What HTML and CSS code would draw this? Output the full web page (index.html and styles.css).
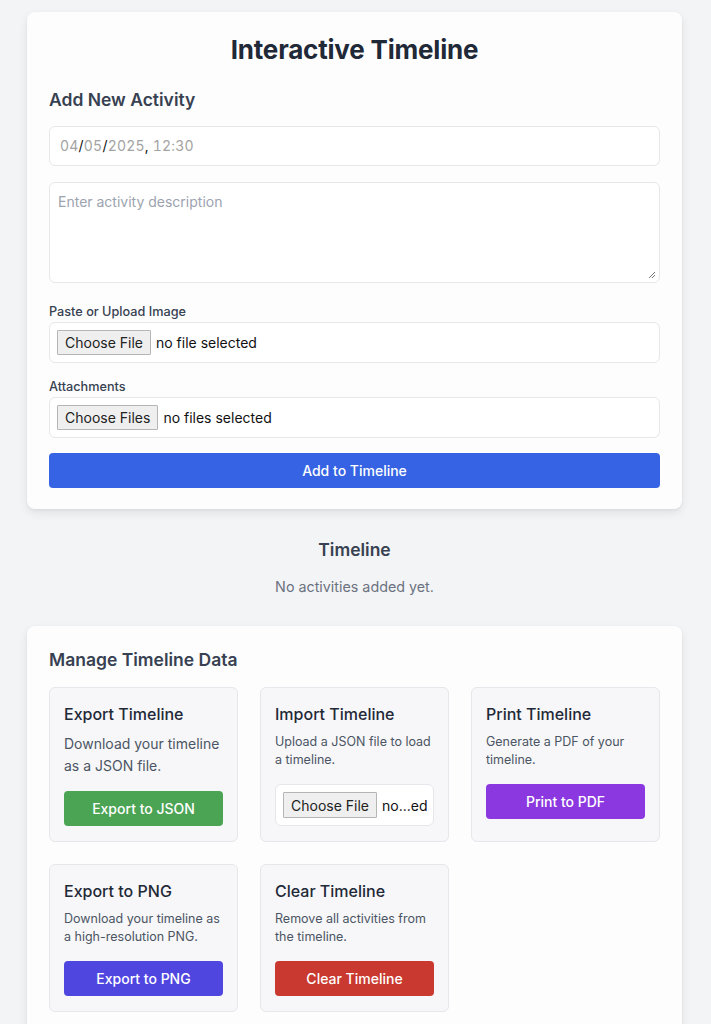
FILE: index.html
```html
<!DOCTYPE html>
<html lang="en">
<head>
<meta charset="utf-8">
<title>Interactive Timeline</title>
<link rel="stylesheet" href="styles.css">
</head>
<body>
<main class="page">
  <section class="card form-card">
    <h1 class="title">Interactive Timeline</h1>
    <h2 class="section-title">Add New Activity</h2>
    <div class="field date-field"><span class="dim">04</span>/<span class="dim">05</span>/<span class="dim">2025</span>,&nbsp;<span class="dim">12:30</span></div>
    <div class="field textarea-field">
      <span class="placeholder">Enter activity description</span>
      <svg class="grip" width="8" height="8" viewBox="0 0 8 8"><path d="M7 1L1 7M7 4L4 7" stroke="#777" stroke-width="1" fill="none"/></svg>
    </div>
    <div class="label">Paste or Upload Image</div>
    <div class="field file-field">
      <span class="file-btn">Choose File</span><span class="file-text">no file selected</span>
    </div>
    <div class="label">Attachments</div>
    <div class="field file-field">
      <span class="file-btn">Choose Files</span><span class="file-text">no files selected</span>
    </div>
    <button class="btn btn-blue btn-full">Add to Timeline</button>
  </section>

  <section class="timeline">
    <h2 class="timeline-title">Timeline</h2>
    <p class="empty">No activities added yet.</p>
  </section>

  <section class="card manage-card">
    <h2 class="section-title">Manage Timeline Data</h2>
    <div class="grid">
      <div class="tile">
        <h3 class="tile-title">Export Timeline</h3>
        <p class="tile-desc large">Download your timeline as a JSON file.</p>
        <button class="btn btn-green">Export to JSON</button>
      </div>
      <div class="tile">
        <h3 class="tile-title">Import Timeline</h3>
        <p class="tile-desc">Upload a JSON file to load a timeline.</p>
        <div class="field file-field small-file">
          <span class="file-btn">Choose File</span><span class="file-text">no...ed</span>
        </div>
      </div>
      <div class="tile">
        <h3 class="tile-title">Print Timeline</h3>
        <p class="tile-desc">Generate a PDF of your timeline.</p>
        <button class="btn btn-purple">Print to PDF</button>
      </div>
      <div class="tile">
        <h3 class="tile-title">Export to PNG</h3>
        <p class="tile-desc">Download your timeline as a high-resolution PNG.</p>
        <button class="btn btn-indigo">Export to PNG</button>
      </div>
      <div class="tile">
        <h3 class="tile-title">Clear Timeline</h3>
        <p class="tile-desc">Remove all activities from the timeline.</p>
        <button class="btn btn-red">Clear Timeline</button>
      </div>
    </div>
  </section>
</main>
</body>
</html>
```

FILE: styles.css
```css
* { box-sizing: border-box; }
html, body { margin: 0; padding: 0; }
body {
  background: #f3f4f6;
  font-family: Inter, "Noto Sans", sans-serif;
  color: #1f2937;
}
.page {
  width: 655px;
  margin-left: 27px;
  padding-top: 12px;
}
.card {
  background: #fdfdfd;
  border-radius: 8px;
  box-shadow: 0 4px 10px rgba(0,0,0,0.08), 0 1px 3px rgba(0,0,0,0.05);
  padding: 22px 22px 21px;
}
.title {
  margin: 0 0 20px;
  text-align: center;
  font-size: 26px;
  line-height: 32px;
  font-weight: 700;
  color: #1f2937;
  letter-spacing: -0.2px;
}
.section-title {
  margin: 0 0 12px;
  font-size: 17.5px;
  line-height: 28px;
  font-weight: 600;
  color: #374151;
}
.field {
  background: #fff;
  border: 1px solid #e5e7eb;
  border-radius: 6px;
}
.date-field {
  height: 40px;
  line-height: 38px;
  padding: 0 10px;
  font-size: 14px;
  color: #111;
  margin-bottom: 16px;
  font-variant-numeric: tabular-nums;
  letter-spacing: 0.2px;
  white-space: nowrap;
}
.dim { color: #a3a3a3; }
.textarea-field {
  position: relative;
  height: 101px;
  padding: 10px 8px;
  font-size: 14px;
  margin-bottom: 20px;
}
.placeholder { color: #9ca3af; }
.grip { position: absolute; right: 3px; bottom: 3px; }
.label {
  font-size: 12.7px;
  line-height: 18px;
  font-weight: 500;
  color: #374151;
  margin-bottom: 1px;
}
.file-field {
  height: 41px;
  display: flex;
  align-items: center;
  padding: 0 7px;
  margin-bottom: 15px;
  white-space: nowrap;
}
.file-btn {
  flex-shrink: 0;
  display: inline-flex;
  align-items: center;
  height: 25px;
  padding: 0 7px;
  background: #efefef;
  border: 1px solid #b5b5b5;
  border-radius: 1px;
  font-size: 14px;
  color: #222;
}
.file-text {
  margin-left: 5px;
  font-size: 14px;
  color: #111;
}
.btn {
  display: block;
  border: none;
  border-radius: 4px;
  color: #fff;
  font-family: inherit;
  font-size: 14px;
  font-weight: 500;
  height: 35px;
  width: 100%;
  padding: 0;
  cursor: pointer;
}
.btn-full { margin-top: 15px; }
.btn-blue { background: #3563e3; }
.btn-green { background: #4ba354; }
.btn-purple { background: #8b38e0; }
.btn-indigo { background: #4f46e0; }
.btn-red { background: #c9392f; }

.timeline {
  text-align: center;
  padding: 28px 0 28px;
}
.timeline-title {
  margin: 0 0 13px;
  font-size: 17.5px;
  line-height: 26px;
  font-weight: 600;
  color: #374151;
}
.empty {
  margin: 0;
  font-size: 14.3px;
  line-height: 22px;
  color: #6b7280;
}
.manage-card {
  padding-top: 20px;
  padding-bottom: 22px;
  border-bottom-left-radius: 0;
  border-bottom-right-radius: 0;
}
.manage-card .section-title { margin-bottom: 13px; }
.grid {
  display: grid;
  grid-template-columns: repeat(3, minmax(0, 1fr));
  gap: 22px;
}
.tile {
  min-width: 0;
  background: #f7f7f9;
  border: 1px solid #e5e7eb;
  border-radius: 6px;
  padding: 15px 14px 15px;
  display: flex;
  flex-direction: column;
}
.tile-title {
  margin: 0 0 8px;
  font-size: 16px;
  line-height: 22px;
  font-weight: 500;
  color: #1f2937;
}
.tile-desc {
  margin: 0 0 15px;
  font-size: 12.5px;
  line-height: 18px;
  color: #4b5563;
}
.tile-desc.large {
  font-size: 14px;
  line-height: 22px;
  margin-bottom: 14px;
}
.small-file {
  height: 42px;
  margin-bottom: 0;
  padding: 0 7px;
  overflow: hidden;
}
.small-file .file-text { margin-left: 5px; }
.small-file .file-btn { height: 26px; }
```
